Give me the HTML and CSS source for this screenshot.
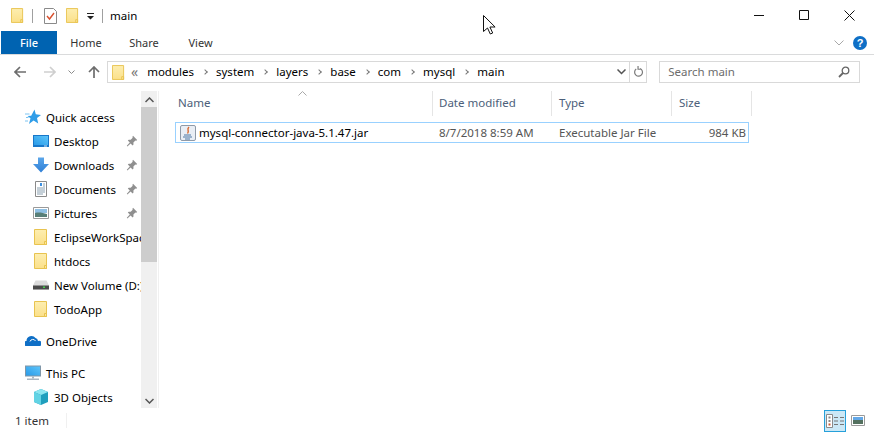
FILE: index.html
```html
<!DOCTYPE html>
<html lang="en">
<head>
  <meta charset="UTF-8">
  <title>main</title>
  <link rel="stylesheet" href="styles.css">
</head>
<body>
  <svg class="defs" width="0" height="0">
    <defs>
      <linearGradient id="down" x1="0" y1="0" x2="0" y2="1">
        <stop offset="0" stop-color="#5ba6ea"/>
        <stop offset="1" stop-color="#2f7fd6"/>
      </linearGradient>
      <linearGradient id="screen" x1="0" y1="1" x2="1" y2="0">
        <stop offset="0" stop-color="#2a9be8"/>
        <stop offset="1" stop-color="#5cc4fa"/>
      </linearGradient>
      <linearGradient id="folderfill" x1="0" y1="0" x2="0" y2="1">
        <stop offset="0" stop-color="#fdeeb0"/>
        <stop offset="1" stop-color="#fbe08a"/>
      </linearGradient>
    </defs>
    <symbol id="folder" viewBox="0 0 14 16">
      <path d="M.5.500h12v15H.500z" fill="url(#folderfill)" stroke="#e8c34f"/>
      <path d="M10.500 15.500v-3h2v3z" fill="#fde79a" stroke="#e8c34f"/>
    </symbol>
    <symbol id="pin" viewBox="0 0 12 12">
      <path d="M7 .8l4.200 4.200-1 .8-.8-.3-2 2 .1 2-.9.900-2-2-3.200 3-.6-.6 3-3.200-2-2 .9-.9 2 .1 2-2-.3-.8z" fill="#8f8f8f"/>
    </symbol>
  </svg>

  <header class="titlebar">
    <svg class="icon16" viewBox="0 0 14 16"><use href="#folder"/></svg>
    <span class="qa-sep"></span>
    <svg class="icon-doc" viewBox="0 0 13 16">
      <path d="M.5.500h9l3 3v12H.500z" fill="#fff" stroke="#8a8a8a"/>
      <path d="M3 8l2.500 3L10 5" fill="none" stroke="#d9502e" stroke-width="1.400"/>
    </svg>
    <svg class="icon16 folder-b" viewBox="0 0 14 16"><use href="#folder"/></svg>
    <svg class="qa-drop" viewBox="0 0 7 7"><path d="M0 0h7v1H0zM0 3h7L3.500 6.500z" fill="#222"/></svg>
    <span class="qa-sep sep-b"></span>
    <span class="title-text">main</span>
    <div class="win-controls">
      <svg viewBox="0 0 11 11"><path d="M0 5.500h10" stroke="#111"/></svg>
      <svg viewBox="0 0 11 11"><path d="M.5.500h9v9h-9z" fill="none" stroke="#111"/></svg>
      <svg viewBox="0 0 11 11"><path d="M.5.500l10 10M10.500.500l-10 10" stroke="#111"/></svg>
    </div>
  </header>

  <nav class="ribbon">
    <a class="tab tab-file">File</a>
    <a class="tab">Home</a>
    <a class="tab">Share</a>
    <a class="tab tab-view">View</a>
    <svg class="ribbon-chev" viewBox="0 0 10 6"><path d="M.5.500L5 5 9.500.500" fill="none" stroke="#a8a8a8"/></svg>
    <span class="help">?</span>
  </nav>

  <section class="addressrow">
    <svg class="arrow" viewBox="0 0 12 12"><path d="M12 6H1.500M6 1L1 6l5 5" fill="none" stroke="#6d6d6d" stroke-width="1.700"/></svg>
    <svg class="arrow forward" viewBox="0 0 12 12"><path d="M0 6h10.500M6 1l5 5-5 5" fill="none" stroke="#cfcfcf" stroke-width="1.700"/></svg>
    <svg class="recent" viewBox="0 0 7 5"><path d="M.5.500L3.500 3.500 6.500.500" fill="none" stroke="#8a8a8a"/></svg>
    <svg class="arrow up" viewBox="0 0 12 12"><path d="M6 12V1.500M1 6l5-5 5 5" fill="none" stroke="#6d6d6d" stroke-width="1.700"/></svg>
    <div class="addressbox">
      <svg class="icon16" viewBox="0 0 14 16"><use href="#folder"/></svg>
      <span class="crumb-more">«</span>
      <span class="crumb first">modules</span><i class="crumb-sep"></i>
      <span class="crumb">system</span><i class="crumb-sep"></i>
      <span class="crumb">layers</span><i class="crumb-sep"></i>
      <span class="crumb">base</span><i class="crumb-sep"></i>
      <span class="crumb">com</span><i class="crumb-sep"></i>
      <span class="crumb">mysql</span><i class="crumb-sep"></i>
      <span class="crumb">main</span>
      <svg class="addr-drop" viewBox="0 0 9 6"><path d="M.5.500l4 4 4-4" fill="none" stroke="#555" stroke-width="1.500"/></svg>
      <span class="addr-refresh">
        <svg viewBox="0 0 12 13"><path d="M7.500 2.700A4.300 4.300 0 1 1 3.500 3.300M5.500 0v3.500H9" fill="none" stroke="#7a7a7a" stroke-width="1.300"/></svg>
      </span>
    </div>
    <div class="searchbox">
      <span class="search-text">Search main</span>
      <svg viewBox="0 0 12 12"><circle cx="7.500" cy="4.500" r="3.300" fill="none" stroke="#666" stroke-width="1.300"/><path d="M5 7l-4 4" stroke="#666" stroke-width="1.800"/></svg>
    </div>
  </section>

  <main class="content">
    <aside class="sidebar">
      <ul class="tree">
        <li class="item top">
          <svg class="nav-icon" viewBox="0 0 16 15"><path d="M9.500 0l1.300 4.800 5.200.6-4 3.200 1.200 5.400-4.600-3L4 14.500l1.500-5.700L2.500 6.500l3.700-.3z" fill="#2f9de8"/><path d="M0 4.500h4.500M1 8h2.500M0 11.500h3" stroke="#7cc4f2"/></svg>
          <span>Quick access</span>
        </li>
        <li class="item sub">
          <svg class="nav-icon" viewBox="0 0 16 12"><path d="M0 0h16v12H0z" fill="#1877c9"/><path d="M1 1h14v9H1z" fill="url(#screen)"/><path d="M11 11h3" stroke="#cfe6f7"/></svg>
          <span>Desktop</span><svg class="pin"><use href="#pin"/></svg>
        </li>
        <li class="item sub">
          <svg class="nav-icon" viewBox="0 0 16 15"><path d="M5 0h6v6.500h5L8 15 0 6.500h5z" fill="url(#down)"/></svg>
          <span>Downloads</span><svg class="pin"><use href="#pin"/></svg>
        </li>
        <li class="item sub">
          <svg class="nav-icon" viewBox="0 0 16 16"><path d="M2.500.500h11v15h-11z" fill="#fff" stroke="#8a8a8a"/><path d="M4 7h8M4 9h8M4 11h8M4 13h6" stroke="#8aa0b0"/><path d="M7 2h2v3H7z" fill="#3b8fe0"/><path d="M10 3h2M10 5h2" stroke="#8aa0b0"/></svg>
          <span>Documents</span><svg class="pin"><use href="#pin"/></svg>
        </li>
        <li class="item sub">
          <svg class="nav-icon" viewBox="0 0 16 12"><path d="M.5.500h15v11H.500z" fill="#fff" stroke="#9a9a9a"/><path d="M2 2h12v4H2z" fill="#8fc0e4"/><path d="M2 6c4-1 8 0 12 1v3H2z" fill="#587f78"/></svg>
          <span>Pictures</span><svg class="pin"><use href="#pin"/></svg>
        </li>
        <li class="item sub">
          <svg class="nav-icon" viewBox="0 0 14 16"><use href="#folder"/></svg>
          <span>EclipseWorkSpace</span>
        </li>
        <li class="item sub">
          <svg class="nav-icon" viewBox="0 0 14 16"><use href="#folder"/></svg>
          <span>htdocs</span>
        </li>
        <li class="item sub">
          <svg class="nav-icon" viewBox="0 0 16 9"><path d="M2.500 0h11L16 5v4H0V5z" fill="#dcdcdc"/><path d="M0 5h16v4H0z" fill="#4a4a4a"/><path d="M10 6h2v1.500h-2z" fill="#45d24a"/></svg>
          <span>New Volume (D:)</span>
        </li>
        <li class="item sub">
          <svg class="nav-icon" viewBox="0 0 14 16"><use href="#folder"/></svg>
          <span>TodoApp</span>
        </li>
        <li class="item top gap">
          <svg class="nav-icon" viewBox="0 0 16 10"><path d="M1 10a2.500 2.500 0 0 1 .5-5A5 5 0 0 1 10.500 2 3.500 3.500 0 0 1 13 5a2.500 2.500 0 0 1 2 5z" fill="#0f6fc6"/><path d="M5 5.500a3 3 0 0 1 5.500-.5" fill="none" stroke="#fff"/></svg>
          <span>OneDrive</span>
        </li>
        <li class="item top gap">
          <svg class="nav-icon" viewBox="0 0 16 15"><path d="M0 0h16v11H0z" fill="#7f96a8"/><path d="M1 1h14v9H1z" fill="url(#screen)"/><path d="M7 11h2v2H7z" fill="#a9b6c2"/><path d="M2 13h12v1.500H2z" fill="#a9b6c2"/></svg>
          <span>This PC</span>
        </li>
        <li class="item sub">
          <svg class="nav-icon" viewBox="0 0 16 16"><path d="M8 0l7 3v10l-7 3-7-3V3z" fill="#1f9fbd"/><path d="M1 3l7 3 7-3-7-3z" fill="#8ce6f0"/><path d="M8 6v10l-7-3V3z" fill="#62d3e4"/></svg>
          <span>3D Objects</span>
        </li>
      </ul>
      <div class="scrollbar">
        <svg class="sb-arrow" viewBox="0 0 9 6"><path d="M.5 5L4.500 1l4 4" fill="none" stroke="#555" stroke-width="1.500"/></svg>
        <div class="sb-thumb"></div>
        <svg class="sb-arrow" viewBox="0 0 9 6"><path d="M.5 1l4 4 4-4" fill="none" stroke="#555" stroke-width="1.500"/></svg>
      </div>
    </aside>

    <section class="files">
      <svg class="sort" viewBox="0 0 9 5"><path d="M.5 4.500l4-4 4 4" fill="none" stroke="#a9a9a9"/></svg>
      <div class="cols col-head">
        <span>Name</span><span>Date modified</span><span>Type</span><span>Size</span>
      </div>
      <div class="cols file-row">
        <span class="file-name">
          <svg viewBox="0 0 16 16"><rect x=".5" y=".5" width="15" height="15" rx="1.500" fill="#e9eef5" stroke="#8f9aa8"/><path d="M9 2C6 4.500 10 6 7.500 8.500" fill="none" stroke="#d9662b" stroke-width="1.400"/><path d="M4 10h7M3 12h9M5 14h5" stroke="#4d76a3"/></svg>
          mysql-connector-java-5.1.47.jar
        </span>
        <span>8/7/2018 8:59 AM</span>
        <span>Executable Jar File</span>
        <span class="file-size">984 KB</span>
      </div>
    </section>
  </main>

  <footer class="statusbar">
    <span class="status-count">1 item</span>
    <div class="view-btns">
      <span class="view-btn on">
        <svg viewBox="0 0 18 14"><path d="M.5.500h6v13h-6z" fill="#fff" stroke="#8a8a8a"/><path d="M2.500 2.500h2v2h-2zM2.500 6h2v2h-2z" fill="#888"/><path d="M2.500 9.500h2v2h-2z" fill="#c9572f"/><path d="M8 3.500h4M14 3.500h4M8 7h4M14 7h4M8 10.500h4M14 10.500h4" stroke="#777"/></svg>
      </span>
      <span class="view-btn">
        <svg viewBox="0 0 14 11"><path d="M.5.500h13v10H.500z" fill="#fff" stroke="#9a9a9a"/><path d="M2 2h10v3H2z" fill="#62a8e8"/><path d="M2 5h10v4H2z" fill="#53705f"/></svg>
      </span>
    </div>
  </footer>

  <svg class="cursor" viewBox="0 0 13 20"><path d="M.5.500v16l4-3.500 2.800 6 2.400-1-2.800-6h5.200z" fill="#fff" stroke="#111"/></svg>
</body>
</html>
```

FILE: styles.css
```css
* {
  box-sizing: border-box;
}
html, body {
  margin: 0;
  height: 100%;
  overflow: hidden;
}
body {
  position: relative;
  display: flex;
  flex-direction: column;
  width: 874px;
  height: 433px;
  background: #fff;
  color: #000;
  font-family: "Noto Sans", "Open Sans", sans-serif;
  font-size: 11.5px;
}
svg {
  display: block;
  flex: none;
}
.defs {
  position: absolute;
}

.titlebar {
  display: flex;
  align-items: center;
  height: 31px;
  padding-left: 11px;
}
.icon16 {
  width: 13px;
  height: 15px;
}
.qa-sep {
  width: 1px;
  height: 14px;
  margin-left: 8px;
  background: #a0a0a0;
}
.icon-doc {
  width: 13px;
  height: 16px;
  margin-left: 11px;
}
.folder-b {
  margin-left: 9px;
}
.qa-drop {
  width: 7px;
  height: 7px;
  margin-left: 8px;
  margin-top: 2px;
}
.sep-b {
  margin-left: 8px;
}
.title-text {
  margin-left: 7px;
}
.win-controls {
  display: flex;
  gap: 34px;
  margin-left: auto;
  margin-right: 19px;
}
.win-controls svg {
  width: 11px;
  height: 11px;
}

.ribbon {
  display: flex;
  align-items: center;
  height: 24px;
  padding-left: 1px;
  border-bottom: 1px solid #dadbdc;
}
.tab {
  width: 58px;
  text-align: center;
  color: #333;
  font-size: 11px;
}
.tab-file {
  width: 56px;
  height: 23px;
  line-height: 23px;
  background: #0063b1;
  color: #fff;
  font-weight: 500;
}
.tab-view {
  width: 55px;
}
.ribbon-chev {
  width: 10px;
  height: 6px;
  margin-left: auto;
  margin-right: -2px;
}
.help {
  width: 14px;
  height: 14px;
  margin: 0 7px 0 11px;
  border-radius: 50%;
  background: #0f6fc6;
  color: #fff;
  font: bold 11px/14px "Liberation Sans", sans-serif;
  text-align: center;
}

.addressrow {
  display: flex;
  align-items: center;
  height: 36px;
  padding: 0 14px 2px;
}
.arrow {
  width: 12px;
  height: 12px;
}
.forward {
  margin-left: 18px;
}
.recent {
  width: 7px;
  height: 5px;
  margin-left: 12px;
}
.up {
  margin-left: 13px;
}
.addressbox {
  display: flex;
  align-items: center;
  width: 541px;
  height: 22px;
  margin-left: 7px;
  padding-left: 4px;
  border: 1px solid #d9d9d9;
}
.crumb-more {
  margin-left: 6px;
  color: #777;
  font-size: 14px;
  line-height: 16px;
}
.crumb, .search-text {
  margin-bottom: 2px;
}
.crumb {
  margin-left: 9px;
}
.crumb.first {
  margin-left: 9px;
}
.crumb-sep {
  width: 4px;
  height: 4px;
  margin-left: 9px;
  border-top: 1px solid #777;
  border-right: 1px solid #777;
  transform: rotate(45deg);
}
.addr-drop {
  width: 9px;
  height: 6px;
  margin-left: auto;
  margin-right: 3px;
}
.addr-refresh {
  display: flex;
  align-items: center;
  justify-content: center;
  width: 17px;
  height: 20px;
  border-left: 1px solid #d9d9d9;
}
.addr-refresh svg {
  width: 11px;
  height: 12px;
}
.searchbox {
  display: flex;
  align-items: center;
  justify-content: space-between;
  width: 201px;
  height: 22px;
  margin-left: 12px;
  padding: 0 9px 0 8px;
  border: 1px solid #d9d9d9;
  color: #6d6d6d;
}
.searchbox svg {
  width: 12px;
  height: 12px;
}

.content {
  display: flex;
  flex: 1;
  min-height: 0;
}
.sidebar {
  display: flex;
  width: 159px;
  border-right: 1px solid #f0f0f0;
}
.tree {
  width: 141px;
  margin: 0;
  padding: 14px 0 0;
  overflow: hidden;
  list-style: none;
}
.item {
  display: flex;
  align-items: center;
  height: 24px;
  white-space: nowrap;
}
.item span {
  flex: none;
}
.top {
  padding-left: 25px;
}
.sub {
  padding-left: 33px;
}
.gap {
  margin-top: 8px;
}
.nav-icon {
  width: 16px;
  height: 16px;
  margin-right: 5px;
}
.pin {
  width: 12px;
  height: 12px;
  position: absolute;
  left: 126px;
}
.scrollbar {
  display: flex;
  flex-direction: column;
  align-items: center;
  width: 16px;
  background: #f0f0f0;
}
.sb-arrow {
  width: 9px;
  height: 6px;
  margin: 6px 0 4px;
}
.sb-thumb {
  width: 100%;
  height: 155px;
  margin-bottom: auto;
  background: #cdcdcd;
}

.files {
  position: relative;
  flex: 1;
  padding: 0 0 0 16px;
}
.sort {
  position: absolute;
  left: 139px;
  top: 0;
  width: 9px;
  height: 5px;
}
.cols {
  display: grid;
  grid-template-columns: 258px 119px 120px 80px;
}
.col-head {
  height: 25px;
  color: #4c607a;
  line-height: 23px;
}
.col-head span {
  padding-left: 7px;
  border-right: 1px solid #e5e5e5;
}
.col-head span:first-child {
  padding-left: 3px;
}
.col-head span:nth-child(2) {
  padding-left: 6px;
}
.file-row {
  width: 574px;
  height: 21px;
  margin-top: 6px;
  border: 1px solid #99d1ff;
  line-height: 19px;
  color: #555;
}
.file-row span {
  padding-left: 5px;
}
.file-row span:nth-child(3) {
  padding-left: 6px;
}
.file-row .file-name {
  display: flex;
  align-items: center;
  gap: 3px;
  padding-left: 4px;
  color: #000;
}
.file-name svg {
  width: 16px;
  height: 16px;
}
.file-row .file-size {
  padding: 0 7px 0 0;
  text-align: right;
}

.statusbar {
  display: flex;
  align-items: center;
  justify-content: space-between;
  height: 25px;
  padding: 0 5px 0 15px;
  color: #333;
}
.status-count {
  padding-right: 17px;
  border-right: 1px solid #f0f0f0;
}
.view-btns {
  display: flex;
  gap: 1px;
}
.view-btn {
  display: flex;
  align-items: center;
  justify-content: center;
  width: 22px;
  height: 22px;
  border: 1px solid transparent;
}
.view-btn.on {
  border-color: #26a0da;
  background: #cbe8f6;
}
.view-btn svg {
  width: 14px;
  height: 11px;
}
.view-btn.on svg {
  width: 18px;
  height: 14px;
}

/* mouse pointer sitting over the title bar */
.cursor {
  position: absolute;
  left: 483px;
  top: 15px;
  width: 13px;
  height: 20px;
}
```
